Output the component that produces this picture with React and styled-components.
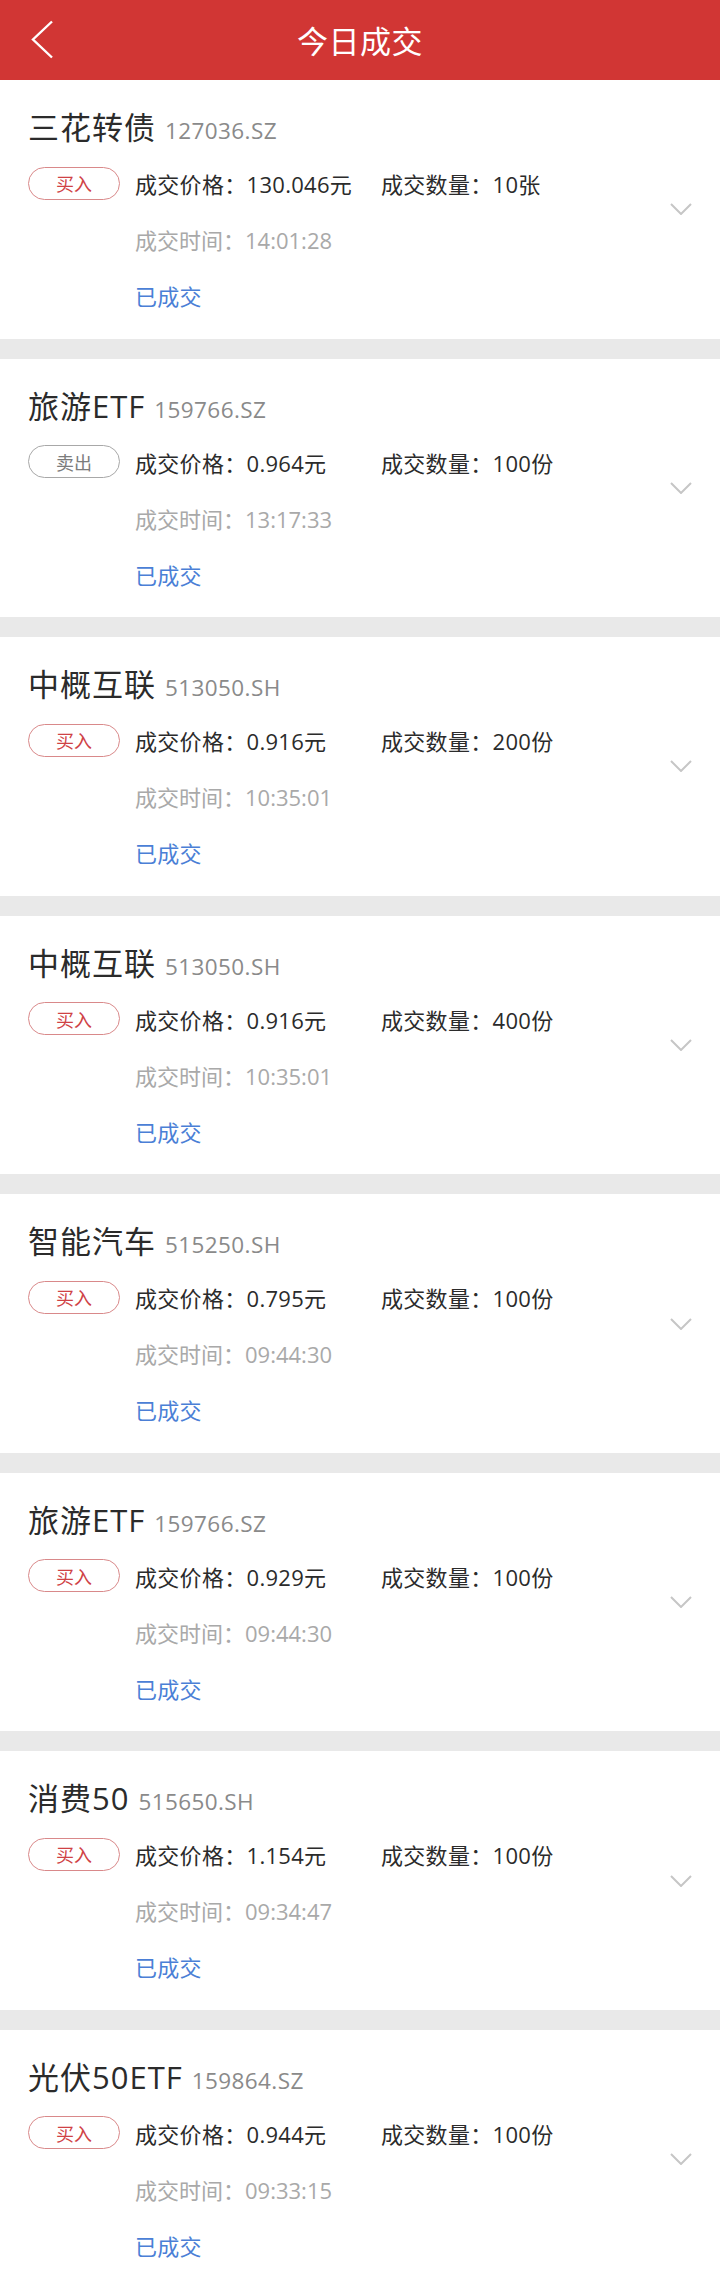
import React from 'react'
import styled, { createGlobalStyle } from 'styled-components'

const GlobalStyle = createGlobalStyle`
  html, body {
    margin: 0;
    padding: 0;
    background: #e9e9e9;
    font-family: "Open Sans", "Noto Sans CJK SC", sans-serif;
  }
`

const trades = [
  { name: '三花转债', code: '127036.SZ', side: 'buy', price: '130.046元', qty: '10张', time: '14:01:28' },
  { name: '旅游ETF', code: '159766.SZ', side: 'sell', price: '0.964元', qty: '100份', time: '13:17:33' },
  { name: '中概互联', code: '513050.SH', side: 'buy', price: '0.916元', qty: '200份', time: '10:35:01' },
  { name: '中概互联', code: '513050.SH', side: 'buy', price: '0.916元', qty: '400份', time: '10:35:01' },
  { name: '智能汽车', code: '515250.SH', side: 'buy', price: '0.795元', qty: '100份', time: '09:44:30' },
  { name: '旅游ETF', code: '159766.SZ', side: 'buy', price: '0.929元', qty: '100份', time: '09:44:30' },
  { name: '消费50', code: '515650.SH', side: 'buy', price: '1.154元', qty: '100份', time: '09:34:47' },
  { name: '光伏50ETF', code: '159864.SZ', side: 'buy', price: '0.944元', qty: '100份', time: '09:33:15' },
]

const Page = styled.div`
  width: 720px;
  min-height: 2287px;
  background: #e9e9e9;
`

const Header = styled.header`
  height: 80px;
  background: #d13634;
  display: grid;
  grid-template-columns: 100px 1fr 100px;
  align-items: center;
`

const BackButton = styled.div`
  display: flex;
  align-items: center;
  padding-left: 31px;
  height: 80px;
`

const Title = styled.h1`
  margin: 0;
  text-align: center;
  color: #fff;
  font-family: "Noto Sans CJK SC", sans-serif;
  font-size: 31px;
  font-weight: 400;
  line-height: 80px;
  letter-spacing: 0.5px;
`

const List = styled.div`
  display: flex;
  flex-direction: column;
  gap: 20px;
`

const Card = styled.section`
  height: 258.57px;
  box-sizing: border-box;
  background: #fff;
  display: flex;
  align-items: center;
  padding: 19px 28px 0 28px;
`

const Body = styled.div`
  flex: 1;
  align-self: flex-start;
`

const NameRow = styled.div`
  height: 56px;
  display: flex;
  align-items: baseline;
  line-height: 56px;
`

const Name = styled.span`
  font-size: 31px;
  color: #2b2b2b;
  letter-spacing: 1px;
`

const Code = styled.span`
  font-size: 22.5px;
  color: #8a8a8a;
  margin-left: 9px;
  letter-spacing: 0.4px;
`

const Row = styled.div`
  height: 56px;
  display: flex;
  align-items: center;
  padding-left: ${(p) => (p.$indent ? '107px' : '0')};
  font-size: 22px;
  letter-spacing: ${(p) => (p.$tight ? '0' : '0.3px')};
  color: ${(p) => p.$color || '#2b2b2b'};
`

const Badge = styled.span`
  width: 92px;
  height: 33px;
  box-sizing: border-box;
  border-radius: 17px;
  border: 1px solid ${(p) => (p.$sell ? '#a8a8a8' : '#d9898a')};
  color: ${(p) => (p.$sell ? '#7c7c7c' : '#cf4245')};
  font-family: "Noto Sans CJK SC", sans-serif;
  font-size: 18px;
  letter-spacing: 0;
  display: flex;
  align-items: center;
  justify-content: center;
  margin-right: 15px;
`

const Price = styled.span`
  width: 246px;
`

const Chevron = styled.div`
  width: 22px;
  height: 12px;
  display: flex;
  margin-top: -19px;
`

const Trade = ({ trade }) => {
  const sell = trade.side === 'sell'
  return (
    <Card>
      <Body>
        <NameRow>
          <Name>{trade.name}</Name>
          <Code>{trade.code}</Code>
        </NameRow>
        <Row>
          <Badge $sell={sell}>{sell ? '卖出' : '买入'}</Badge>
          <Price>成交价格：{trade.price}</Price>
          <span>成交数量：{trade.qty}</span>
        </Row>
        <Row $indent $tight $color="#a9a9a9">成交时间：{trade.time}</Row>
        <Row $indent $color="#4b7fd6">已成交</Row>
      </Body>
      <Chevron>
        <svg width="22" height="12" viewBox="0 0 22 12">
          <polyline points="1,1 11,11 21,1" fill="none" stroke="#c6c6c6" strokeWidth="2" />
        </svg>
      </Chevron>
    </Card>
  )
}

const App = () => {
  return (
    <Page>
      <GlobalStyle />
      <Header>
        <BackButton>
          <svg width="24" height="40" viewBox="0 0 24 40">
            <polyline points="21,1.5 2,19.5 21,37.5" fill="none" stroke="#fff" strokeWidth="2.4" />
          </svg>
        </BackButton>
        <Title>今日成交</Title>
        <div />
      </Header>
      <List>
        {trades.map((trade, index) => (
          <Trade trade={trade} key={'trade' + index} />
        ))}
      </List>
    </Page>
  )
}

export default App
